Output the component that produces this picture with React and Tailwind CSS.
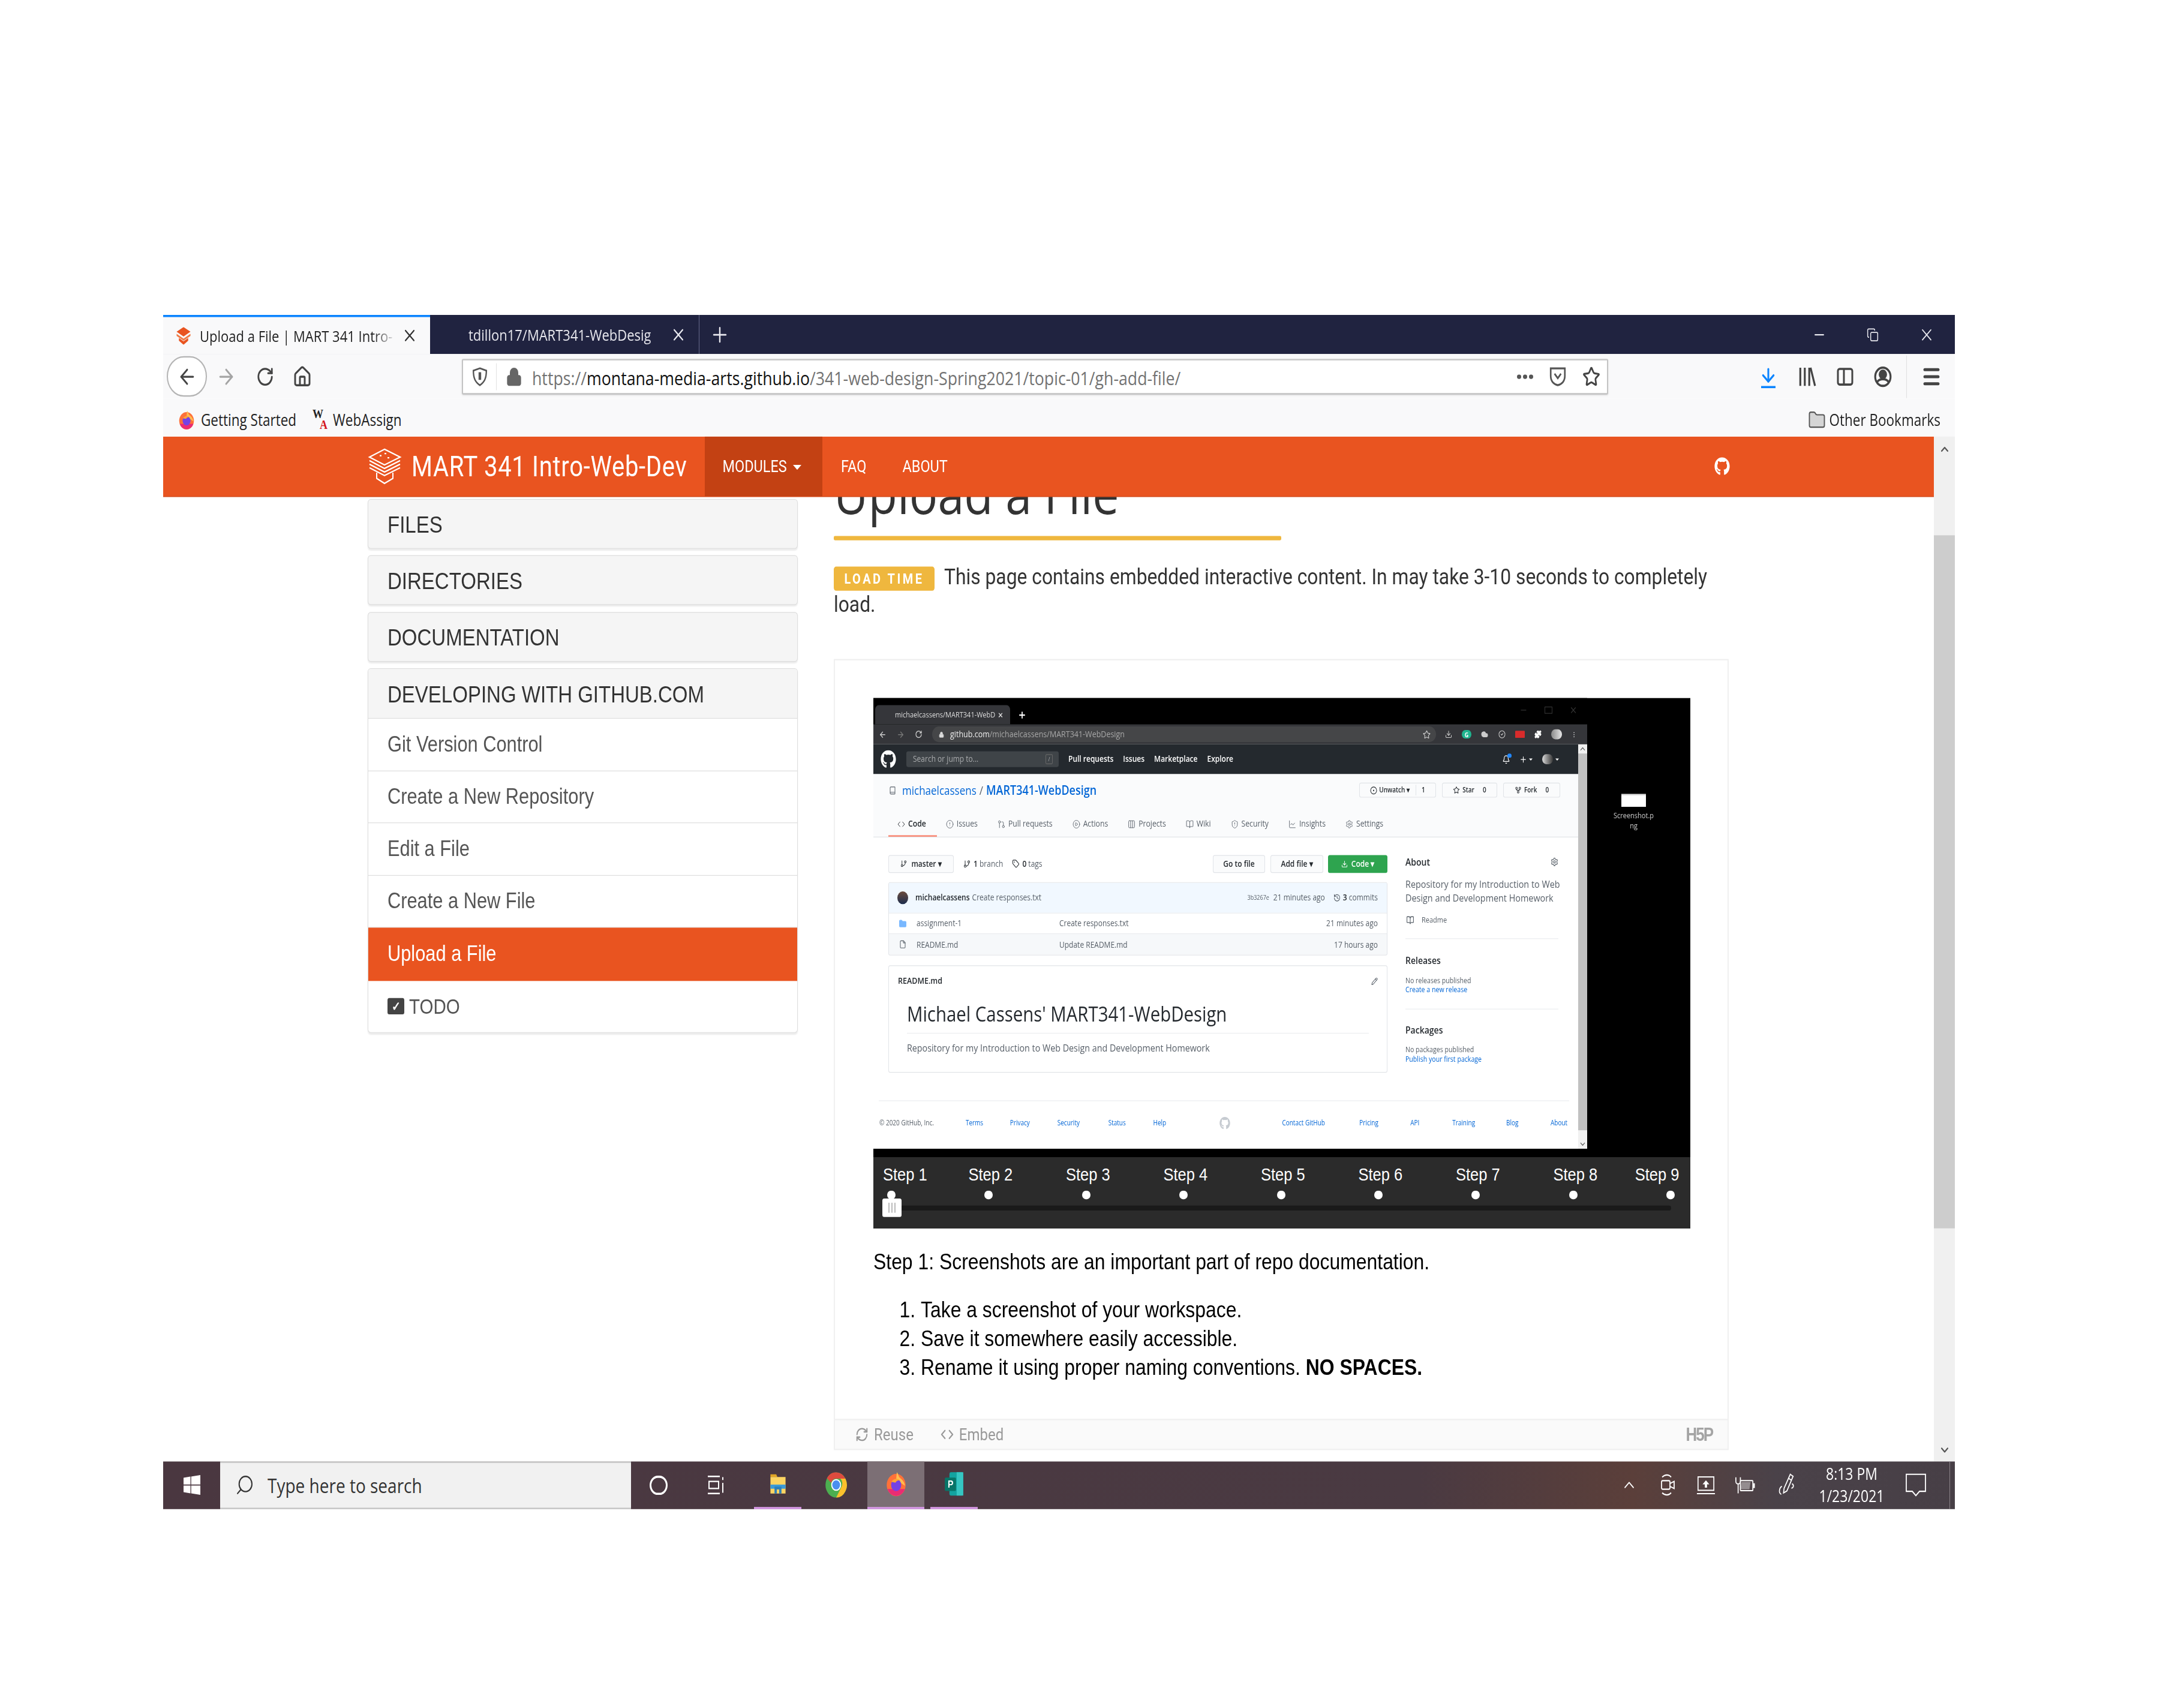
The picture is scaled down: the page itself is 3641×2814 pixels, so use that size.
import React from 'react';
import {
  ArrowLeft, ArrowRight, RotateCw, Home, Lock, Star, Menu, ArrowDown, X, Plus, Minus, Copy,
  Search, Folder, ChevronUp, ChevronDown, Code, CircleAlert,
  GitPullRequest, CirclePlay, Columns3, BookOpen, ShieldAlert, LineChart, Settings, GitBranch, Tag,
  Download, History, File, Pencil, Bell, GitFork, CircleDot, EllipsisVertical, Puzzle, Cloud, CircleCheck,
  Book, RefreshCw,
} from 'lucide-react';
import { FaGithub, FaWindows } from 'react-icons/fa';

const Logo = ({ className, stroke = 'white', fill = 'none' }) => (
  <svg viewBox="0 0 57 52" className={className} fill={fill} stroke={stroke} strokeWidth="2">
    <path d="M28 2 54 13 28 24 3 13Z" />
    <path d="M3 18 28 29 54 18M3 23 28 34 54 23M3 28 28 39 54 28" fill="none" />
    <path d="M15 35V43L28 50 42 43V35" fill="none" />
    <path d="M20 11h3M28 8h3M33 14h3" />
  </svg>
);

const Favicon = ({ className }) => (
  <svg viewBox="0 0 28 26" className={className} fill="#e95420">
    <path d="M14 0 26 7 14 14 2 7Z" />
    <path d="M2 10 14 17 26 10V13L14 20 2 13Z" fill="#f07a45" />
    <path d="M6 16 14 21 22 16V20L14 26 6 20Z" />
  </svg>
);

const FirefoxIcon = ({ className }) => (
  <svg viewBox="0 0 32 32" className={className}>
    <circle cx="16" cy="17" r="14" fill="#ff7139" />
    <path d="M17 1c3 3 2 6 6 8 4 3 6 6 6 9L16 10Z" fill="#ffbd4f" />
    <path d="M3 22a14 14 0 0 0 26 0Z" fill="#e31587" opacity=".75" />
    <circle cx="16" cy="17" r="7.500" fill="#7542e5" />
    <path d="M9 13c3-4 9-5 12-2-3 0-5 1-6 3Z" fill="#ffa436" />
  </svg>
);

const ChromeIcon = ({ className }) => (
  <svg viewBox="0 0 32 32" className={className}>
    <circle cx="16" cy="16" r="15" fill="#4caf50" />
    <path d="M16 1a15 15 0 0 1 13 7.500H16a7.500 7.500 0 0 0-7 5L3 8a15 15 0 0 1 13-7Z" fill="#dd4b3e" />
    <path d="M29 8.500a15 15 0 0 1-13 22.500l7-12a7.500 7.500 0 0 0-1-10.500Z" fill="#fbc02d" />
    <circle cx="16" cy="16" r="7" fill="white" />
    <circle cx="16" cy="16" r="5.500" fill="#4a8ff0" />
  </svg>
);

const ExplorerIcon = ({ className }) => (
  <svg viewBox="0 0 32 32" className={className}>
    <path d="M3 2h10l2 4H3Z" fill="#e0a526" />
    <rect x="3" y="6" width="26" height="24" fill="#fcd462" />
    <rect x="3" y="17" width="26" height="6" fill="#3b9bd8" />
    <path d="M10 30V20h12v10h-4v-6h-4v6Z" fill="#2d7fb8" />
  </svg>
);

const PublisherIcon = ({ className }) => (
  <svg viewBox="0 0 32 32" className={className}>
    <rect x="9" y="1" width="21" height="30" rx="2" fill="#13a3a0" />
    <rect x="20" y="1" width="10" height="30" fill="#36c6c2" />
    <rect x="2" y="8" width="17" height="17" rx="1.500" fill="#077568" />
    <text x="6.500" y="21" fontSize="13" fontWeight="700" fill="white" fontFamily="Liberation Sans">P</text>
  </svg>
);

const H5pMark = () => (
  <span className="font-['Liberation_Sans',sans-serif] text-[26px] font-bold tracking-[-2px] text-[#a4a4a4]">H5P</span>
);

const navLinks = ['FAQ', 'ABOUT'];
const panels = ['FILES', 'DIRECTORIES', 'DOCUMENTATION'];
const items = ['Git Version Control', 'Create a New Repository', 'Edit a File', 'Create a New File'];
const steps = [2, 3, 4, 5, 6, 7, 8];

const TabBar = () => (
  <div className="flex h-[55px] shrink-0 items-stretch bg-[#202340] text-[22px]">
    <div className="flex w-[445px] items-center border-t-[3px] border-[#0a84ff] bg-[#f9f9fa] pl-[20px] text-[#222]">
      <Favicon className="h-[25px] w-[28px]" />
      <span className="ml-[13px] w-[328px] whitespace-nowrap [mask-image:linear-gradient(90deg,#000_88%,transparent)]">Upload a File | MART 341 Intro-</span>
      <X className="ml-[8px] h-[28px] w-[28px] text-[#333]" strokeWidth={1.800} />
    </div>
    <div className="flex w-[449px] items-center border-r border-[#66698a] pl-[64px] text-[#e8e8ee]">
      <span className="w-[326px] whitespace-nowrap [mask-image:linear-gradient(90deg,#000_92%,transparent)]">tdillon17/MART341-WebDesig</span>
      <X className="ml-[10px] h-[28px] w-[28px]" strokeWidth={1.800} />
    </div>
    <div className="flex items-center pl-[17px]">
      <Plus className="h-[34px] w-[34px] text-[#e8e8ee]" strokeWidth={1.700} />
    </div>
    <div className="ml-auto flex items-center gap-[64px] pr-[32px] text-[#e8e8ee]">
      <Minus className="h-[24px] w-[28px]" strokeWidth={1.800} />
      <Copy className="h-[20px] w-[22px]" strokeWidth={1.800} />
      <X className="h-[28px] w-[30px]" strokeWidth={1.500} />
    </div>
  </div>
);

const Toolbar = () => (
  <div className="flex h-[63px] shrink-0 items-center bg-[#f9f9fa] pl-[6px] text-[#444]">
    <div className="flex h-[57px] w-[67px] items-center justify-center rounded-full border-2 border-[#b4b4b4] bg-white">
      <ArrowLeft className="h-[34px] w-[34px]" strokeWidth={2} />
    </div>
    <ArrowRight className="ml-[12px] h-[34px] w-[40px] text-[#a4a4a4]" strokeWidth={2} />
    <RotateCw className="ml-[25px] h-[30px] w-[40px]" strokeWidth={2.200} />
    <Home className="ml-[22px] h-[32px] w-[40px]" strokeWidth={2.200} />
    <div className="ml-[246px] flex h-[50px] w-[1911px] items-center rounded-[2px] border-2 border-[#c4c4c4] bg-white pl-[15px] pr-[11px] shadow-sm">
      <svg viewBox="0 0 24 26" className="h-[30px] w-[26px]" fill="none" stroke="#555" strokeWidth="2.200">
        <path d="M12 2 22 5c0 10-3 15-10 19C5 20 2 15 2 5Z" />
        <path d="M12 7v10" strokeWidth="4" />
      </svg>
      <div className="ml-[14px] h-[38px] w-px bg-[#e2e2e2]" />
      <Lock className="ml-[15px] h-[30px] w-[28px] fill-[#666] text-[#666]" strokeWidth={2} />
      <span className="ml-[16px] mt-[5px] whitespace-nowrap text-[26.700px] text-[#737373]">
        https://<span className="text-[#111]">montana-media-arts.github.io</span>/341-web-design-Spring2021/topic-01/gh-add-file/
      </span>
      <div className="ml-auto flex items-center gap-[26px]">
        <div className="flex gap-[3px]">
          <span className="h-[6px] w-[7px] rounded-full bg-[#555]" />
          <span className="h-[6px] w-[7px] rounded-full bg-[#555]" />
          <span className="h-[6px] w-[7px] rounded-full bg-[#555]" />
        </div>
        <svg viewBox="0 0 28 26" className="h-[30px] w-[30px]" fill="none" stroke="#555" strokeWidth="2.500">
          <path d="M3 2h22v10c0 7-5 11-11 12C8 23 3 19 3 12Z" />
          <path d="M9 9l5 6 5-6" />
        </svg>
        <Star className="h-[32px] w-[30px]" strokeWidth={2.200} />
      </div>
    </div>
    <div className="ml-[247px] flex w-[40px] flex-col items-center text-[#0a84ff]">
      <ArrowDown className="h-[30px] w-[36px]" strokeWidth={2.400} />
      <span className="h-[3px] w-[24px] bg-[#0a84ff]" />
    </div>
    <svg viewBox="0 0 30 30" className="ml-[24px] h-[32px] w-[40px]" fill="none" stroke="#444" strokeWidth="3">
      <path d="M5 3v24M12 3v24M19 3v24M21 3l7 24" />
    </svg>
    <svg viewBox="0 0 30 30" className="ml-[23px] h-[30px] w-[40px]" fill="none" stroke="#444" strokeWidth="3">
      <rect x="4" y="4" width="24" height="22" rx="3" />
      <path d="M14 4v22" />
    </svg>
    <svg viewBox="0 0 30 30" className="ml-[24px] h-[32px] w-[40px]" fill="none" stroke="#444" strokeWidth="3">
      <circle cx="15" cy="15" r="12" />
      <circle cx="15" cy="12" r="5" fill="#444" />
      <path d="M6 22c4-5 14-5 18 0" />
    </svg>
    <div className="ml-[19px] h-[60px] w-px bg-[#e0e0e0]" />
    <Menu className="ml-[21px] h-[34px] w-[40px]" strokeWidth={3} />
  </div>
);

const BookmarkBar = () => (
  <div className="flex h-[52.500px] shrink-0 items-center justify-between bg-[#f9f9fa] pl-[25px] pr-[24px] pt-[7px] text-[22.500px] text-[#222]">
    <div className="flex items-center">
      <FirefoxIcon className="h-[28px] w-[28px]" />
      <span className="ml-[10px]">Getting Started</span>
      <span className="ml-[27px] flex h-[32px] w-[30px] flex-col font-['Liberation_Serif',serif] text-[18px] font-bold leading-[15px]">
        <span className="text-[#222]">W</span>
        <span className="pl-[12px] text-[#d3141c]">A</span>
      </span>
      <span className="ml-[4px]">WebAssign</span>
    </div>
    <div className="flex items-center gap-[5px]">
      <Folder className="h-[30px] w-[32px] fill-[#d5d5d5] text-[#555]" strokeWidth={1.500} />
      <span>Other Bookmarks</span>
    </div>
  </div>
);

const Navbar = () => (
  <div className="relative z-10 flex h-[85px] shrink-0 items-stretch border-b border-[#cf4a1c] bg-[#e95420] pl-[341px] font-[Roboto,sans-serif] text-white">
    <div className="flex w-[561.500px] items-center">
      <Logo className="h-[52px] w-[57px]" />
      <span className="ml-[16px] pt-[2px] text-[40px] leading-none tracking-[0.700px]">MART 341 Intro-Web-Dev</span>
    </div>
    <div className="flex w-[196.500px] items-center bg-[#c34113] pl-[30px] pt-[2px] text-[23.500px]">
      MODULES
      <span className="ml-[10px] mt-[2px] border-x-[7px] border-t-[7px] border-x-transparent border-t-white" />
    </div>
    <div className="flex items-center gap-[60px] pl-[31px] pt-[2px] text-[23.500px]">
      {navLinks.map((link) => <span key={link}>{link}</span>)}
    </div>
    <FaGithub className="ml-[1278px] mt-[29px] h-[26px] w-[26px]" />
  </div>
);

const Sidebar = () => (
  <div className="ml-[341px] mt-[3.400px] flex w-[717px] shrink-0 flex-col gap-[9.500px] font-['Liberation_Sans',sans-serif]">
    {panels.map((panel) => (
      <div key={panel} className="flex h-[70px] items-center rounded-[5px] border border-[#ddd] bg-[#f5f5f5] pl-[32px] pt-[2px] text-[33px] text-[#333] shadow-[0_2px_2px_rgba(0,0,0,.08)]">
        {panel}
      </div>
    ))}
    <div className="overflow-hidden rounded-[5px] border border-[#ddd] bg-white shadow-[0_2px_2px_rgba(0,0,0,.08)]">
      <div className="flex h-[70px] items-center border-b border-[#ddd] bg-[#f5f5f5] pl-[32px] pt-[2px] text-[33px] text-[#333]">
        DEVELOPING WITH GITHUB.COM
      </div>
      {items.map((item) => (
        <div key={item} className="flex h-[73.400px] items-center border-b border-[#ddd] pl-[32px] text-[30.800px] text-[#555]">
          {item}
        </div>
      ))}
      <div className="flex h-[75px] items-center bg-[#e95420] pl-[32px] text-[30.800px] text-white">Upload a File</div>
      <div className="flex h-[72px] items-center pl-[32px] text-[29.500px] text-[#555]">
        <span className="flex h-[23px] w-[28px] items-center justify-center rounded-[3px] bg-[#444] text-[18px] font-bold leading-none text-white">✓</span>
        <span className="ml-[8px]">TODO</span>
      </div>
    </div>
  </div>
);

const GhButton = ({ children, className = '' }) => (
  <div className={`flex items-center justify-center rounded-[3px] border border-[#e1e4e8] bg-[#fafbfc] text-[#24292e] ${className}`}>
    {children}
  </div>
);

const tabs = [
  [Code, 'Code'], [CircleAlert, 'Issues'], [GitPullRequest, 'Pull requests'], [CirclePlay, 'Actions'],
  [Columns3, 'Projects'], [BookOpen, 'Wiki'], [ShieldAlert, 'Security'], [LineChart, 'Insights'], [Settings, 'Settings'],
];

const footerLeft = [['Terms', 'w-[74px]'], ['Privacy', 'w-[79px]'], ['Security', 'w-[85px]'], ['Status', 'w-[75px]'], ['Help', 'w-[109px]']];
const footerRight = [['Contact GitHub', 'w-[129px]'], ['Pricing', 'w-[85px]'], ['API', 'w-[70px]'], ['Training', 'w-[90px]'], ['Blog', 'w-[74px]'], ['About', 'w-[31px]']];

const FileRow = ({ icon, name, message, time, className = '' }) => (
  <div className={`flex h-[29.500px] items-center border-t border-[#eaecef] pl-[15px] pr-[15px] text-[12px] text-[#586069] ${className}`}>
    <span className="flex w-[16px] justify-center">{icon}</span>
    <span className="ml-[15px] w-[238px]">{name}</span>
    <span>{message}</span>
    <span className="ml-auto">{time}</span>
  </div>
);

const RepoShot = () => (
  <div className="flex h-[634px] w-[1190px] shrink-0 flex-col font-['Open_Sans',sans-serif]">
    <div className="flex h-[37px] shrink-0 items-end bg-black pl-[3px] text-[#ddd]">
      <div className="flex h-[27px] w-[225px] items-center rounded-t-[6px] bg-[#35363a] pl-[33px] text-[11px]">
        <span className="w-[165px] whitespace-nowrap">michaelcassens/MART341-WebD</span>
        <X className="ml-[6px] h-[10px] w-[10px]" strokeWidth={3} />
      </div>
      <Plus className="mb-[6px] ml-[13px] h-[14px] w-[14px] text-white" strokeWidth={3} />
      <div className="ml-auto mb-[13px] flex items-center gap-[28px] pr-[16px] text-[#333]">
        <Minus className="h-[14px] w-[14px]" />
        <span className="h-[10px] w-[13px] border border-[#333]" />
        <X className="h-[14px] w-[14px]" />
      </div>
    </div>
    <div className="flex h-[28px] shrink-0 items-center bg-[#35363a] pl-[9px] text-[#ccc]">
      <ArrowLeft className="h-[13px] w-[13px]" strokeWidth={2.500} />
      <ArrowRight className="ml-[17px] h-[13px] w-[13px] text-[#777]" strokeWidth={2.500} />
      <RotateCw className="ml-[17px] h-[12px] w-[13px]" strokeWidth={2.500} />
      <div className="ml-[16px] flex h-[22px] w-[840px] items-center rounded-full bg-[#454648] pl-[11px] pr-[9px] text-[13px]">
        <Lock className="h-[11px] w-[9px] fill-[#ddd]" />
        <span className="ml-[10px] text-[12.500px] text-[#eee]">github.com<span className="text-[#a8a8a8]">/michaelcassens/MART341-WebDesign</span></span>
        <Star className="ml-auto h-[13px] w-[13px]" />
      </div>
      <div className="ml-[14px] flex items-center gap-[15px]">
        <Download className="h-[12px] w-[14px]" />
        <span className="flex h-[12px] w-[16px] items-center justify-center rounded-full bg-[#1fb58f] text-[9px] font-bold leading-none text-white">G</span>
        <Cloud className="h-[12px] w-[14px] fill-[#ccc]" />
        <CircleCheck className="h-[12px] w-[14px]" />
        <span className="h-[10px] w-[16px] rounded-[1px] bg-[#d92b2b]" />
        <Puzzle className="h-[12px] w-[14px] fill-white text-white" />
        <span className="h-[14px] w-[18px] rounded-full bg-gradient-to-r from-[#8a8a8a] to-[#e8e8e8]" />
        <EllipsisVertical className="h-[13px] w-[10px]" />
      </div>
    </div>
    <div className="flex min-h-0 flex-1">
      <div className="flex w-[1175px] flex-col overflow-hidden bg-white">
        <div className="flex h-[42px] shrink-0 items-center bg-[#24292e] pl-[10px] text-[12px] font-semibold text-white">
          <FaGithub className="h-[26px] w-[30px]" />
          <div className="ml-[15px] flex h-[22px] w-[254px] items-center rounded-[3px] bg-[#3f4448] pl-[11px] pr-[10px] font-normal text-[#a9abad]">
            Search or jump to...
            <span className="ml-auto flex h-[14px] w-[12px] items-center justify-center rounded-[2px] border border-[#666] text-[8px] leading-none">/</span>
          </div>
          <div className="ml-[16px] flex gap-[16px]">
            <span>Pull requests</span>
            <span>Issues</span>
            <span>Marketplace</span>
            <span>Explore</span>
          </div>
          <div className="ml-auto flex items-center pr-[32px]">
            <span className="relative">
              <Bell className="h-[13px] w-[14px]" />
              <span className="absolute -right-[2px] -top-[2px] h-[6px] w-[7px] rounded-full bg-[#2188ff]" />
            </span>
            <Plus className="ml-[15px] h-[13px] w-[13px]" />
            <span className="ml-[3px] border-x-[3px] border-t-[3px] border-x-transparent border-t-white" />
            <span className="ml-[16px] h-[14px] w-[18px] rounded-full bg-gradient-to-r from-[#ddd] to-[#3a3a3a]" />
            <span className="ml-[4px] border-x-[3px] border-t-[3px] border-x-transparent border-t-white" />
          </div>
        </div>
        <div className="flex h-[88.600px] shrink-0 flex-col border-b border-[#e1e4e8] bg-[#fafbfc]">
          <div className="mt-[12px] flex h-[21px] items-center pl-[26px] pr-[30px]">
            <Book className="h-[16px] w-[12px] text-[#586069]" />
            <span className="ml-[10px] text-[17px] text-[#0366d6]">michaelcassens</span>
            <span className="mx-[5px] text-[17px] text-[#586069]">/</span>
            <span className="text-[18px] font-semibold text-[#0366d6]">MART341-WebDesign</span>
            <div className="ml-auto flex items-center gap-[10px] text-[10px] font-semibold">
              <GhButton className="h-[21px] w-[128px]">
                <CircleDot className="h-[12px] w-[12px]" />
                <span className="ml-[3px]">Unwatch ▾</span>
                <span className="ml-[10px] border-l border-[#e1e4e8] pl-[9px]">1</span>
              </GhButton>
              <GhButton className="h-[21px] w-[92px]">
                <Star className="h-[11px] w-[12px]" />
                <span className="ml-[4px]">Star</span>
                <span className="ml-[14px]">0</span>
              </GhButton>
              <GhButton className="h-[21px] w-[95px]">
                <GitFork className="h-[11px] w-[12px]" />
                <span className="ml-[4px]">Fork</span>
                <span className="ml-[14px]">0</span>
              </GhButton>
            </div>
          </div>
          <div className="mt-[28px] flex h-[18px] items-center gap-[33px] pl-[40px] text-[12.200px] text-[#586069]">
            {tabs.map(([Icon, label], i) => (
              <span key={label} className={`flex items-center gap-[5px] ${i === 0 ? 'font-semibold text-[#24292e]' : ''}`}>
                <Icon className="h-[13px] w-[13px]" strokeWidth={1.500} />
                {label}
              </span>
            ))}
          </div>
          <div className="ml-[25px] mt-auto h-[2px] w-[81px] bg-[#f9826c]" />
        </div>
        <div className="flex h-[341px] shrink-0 pl-[25px]">
          <div className="w-[832px] shrink-0">
            <div className="mt-[25px] flex h-[25.300px] items-center text-[12px] font-semibold text-[#24292e]">
              <GhButton className="h-full w-[109px]">
                <GitBranch className="h-[12px] w-[11px]" />
                <span className="ml-[7px]">master ▾</span>
              </GhButton>
              <GitBranch className="ml-[16px] h-[13px] w-[12px]" />
              <span className="ml-[5px]">1 <span className="font-normal text-[#586069]">branch</span></span>
              <Tag className="ml-[15px] h-[12px] w-[13px]" />
              <span className="ml-[4px]">0 <span className="font-normal text-[#586069]">tags</span></span>
              <GhButton className="ml-auto h-full w-[87px]">Go to file</GhButton>
              <GhButton className="ml-[9px] h-full w-[88px]">Add file ▾</GhButton>
              <div className="ml-[8px] flex h-full w-[99px] items-center justify-center rounded-[3px] bg-[#2ea44f] text-white">
                <Download className="h-[11px] w-[11px]" />
                <span className="ml-[6px]">Code ▾</span>
              </div>
            </div>
            <div className="mt-[12.700px] overflow-hidden rounded-[3px] border border-[#e1e4e8]">
              <div className="flex h-[42px] items-center bg-[#f1f8ff] pl-[14px] pr-[15px] text-[12px] text-[#586069]">
                <span className="h-[18px] w-[18px] rounded-full bg-gradient-to-b from-[#6b4a3a] to-[#1c2c4c]" />
                <span className="ml-[12px] font-semibold text-[#24292e]">michaelcassens</span>
                <span className="ml-[4px]">Create responses.txt</span>
                <span className="ml-auto text-[9px]">3b3267e</span>
                <span className="ml-[7px]">21 minutes ago</span>
                <History className="ml-[14px] h-[12px] w-[12px]" />
                <span className="ml-[4px]"><b className="font-semibold text-[#24292e]">3</b> commits</span>
              </div>
              <FileRow
                icon={<Folder className="h-[13px] w-[14px] fill-[#79b8ff] text-[#79b8ff]" />}
                name="assignment-1"
                message="Create responses.txt"
                time="21 minutes ago"
              />
              <FileRow
                className="bg-[#f6f8fa]"
                icon={<File className="h-[13px] w-[12px]" />}
                name="README.md"
                message="Update README.md"
                time="17 hours ago"
              />
            </div>
            <div className="mt-[14.300px] h-[151px] rounded-[3px] border border-[#e1e4e8] px-[30px]">
              <div className="-mx-[15px] mt-[12px] flex items-center justify-between text-[12.500px] font-semibold text-[#24292e]">
                README.md
                <Pencil className="h-[13px] w-[11px] text-[#586069]" />
              </div>
              <div className="mt-[18.500px] border-b border-[#eaecef] pb-[9px] text-[29.400px] leading-[36px] text-[#24292e]">
                Michael Cassens' MART341-WebDesign
              </div>
              <div className="mt-[10px] whitespace-nowrap text-[14.300px] leading-[20px] text-[#586069]">
                Repository for my Introduction to Web Design and Development Homework
              </div>
            </div>
          </div>
          <div className="ml-[30px] w-[262px] shrink-0 text-[10.600px] leading-[13.500px] text-[#586069]">
            <div className="mt-[26px] flex h-[17px] w-[255px] items-center justify-between text-[14px] font-semibold text-[#24292e]">
              About
              <Settings className="h-[13px] w-[13px] text-[#586069]" />
            </div>
            <div className="mt-[14.250px] text-[14.400px] leading-[18.500px]">
              Repository for my Introduction to Web Design and Development Homework
            </div>
            <div className="mt-[14px] flex h-[16px] items-center">
              <BookOpen className="h-[13px] w-[16px]" />
              <span className="ml-[11px] text-[11px]">Readme</span>
            </div>
            <div className="mt-[18.300px] h-px w-[255px] bg-[#eaecef]" />
            <div className="mt-[21px] h-[17px] text-[14px] font-semibold leading-[17px] text-[#24292e]">Releases</div>
            <div className="mt-[13.300px]">No releases published</div>
            <div className="text-[#0366d6]">Create a new release</div>
            <div className="mt-[19.300px] h-px w-[255px] bg-[#eaecef]" />
            <div className="mt-[20px] h-[17px] text-[14px] font-semibold leading-[17px] text-[#24292e]">Packages</div>
            <div className="mt-[13.500px]">No packages published</div>
            <div className="text-[#0366d6]">Publish your first package</div>
          </div>
        </div>
        <div className="ml-[9px] mr-[15px] mt-auto flex h-[68px] items-center border-t border-[#eaecef] pb-[6px] pl-[1px] text-[10px] text-[#0366d6]">
          <span className="w-[144px] text-[#586069]">© 2020 GitHub, Inc.</span>
          {footerLeft.map(([link, width]) => <span key={link} className={width}>{link}</span>)}
          <FaGithub className="h-[18px] w-[20px] text-[#c6cbd1]" />
          <span className="w-[86px]" />
          {footerRight.map(([link, width]) => <span key={link} className={`${width} whitespace-nowrap`}>{link}</span>)}
        </div>
      </div>
      <div className="flex w-[15px] flex-col bg-[#f1f1f1]">
        <ChevronUp className="h-[13px] w-[15px] text-[#555]" />
        <div className="h-[530px] bg-[#c1c1c1]" />
        <ChevronDown className="mt-auto h-[13px] w-[15px] text-[#555]" />
      </div>
    </div>
  </div>
);

const StepBar = () => (
  <div className="relative h-[100px] bg-[#2b2b2b] pt-[14px] font-['Liberation_Sans',sans-serif] text-white">
    <div className="flex pl-[16px] text-[25.500px] leading-[21px]">
      <span className="w-[98px] shrink-0 whitespace-nowrap">Step 1</span>
      {steps.map((n) => <span key={n} className="w-[162.500px] shrink-0 text-center">Step {n}</span>)}
      <span className="w-[110px] shrink-0 text-center">Step 9</span>
    </div>
    <div className="ml-[23px] mt-[12px] flex w-[1313px] justify-between">
      {[1, ...steps, 9].map((n) => <span key={n} className="h-[12px] w-[14px] rounded-full bg-white" />)}
    </div>
    <div className="ml-[30px] mt-[8.500px] h-[7.600px] w-[1300px] rounded-full bg-[#1a1a1a]" />
    <div className="absolute left-[15px] top-[58px] flex h-[26px] w-[32px] items-center justify-center gap-[3px] rounded-[3px] bg-white">
      <span className="h-[14px] w-[2px] bg-[#bbb]" />
      <span className="h-[14px] w-[2px] bg-[#bbb]" />
      <span className="h-[14px] w-[2px] bg-[#bbb]" />
    </div>
  </div>
);

const H5pCard = () => (
  <div className="mt-[57px] flex h-[1113px] flex-col border-2 border-[#f0f0f0] font-['Liberation_Sans',sans-serif] text-black">
    <div className="flex-1 pl-[64px] pr-[62px] pt-[53px]">
      <div className="w-[1362px]">
        <div className="flex bg-black pb-[12px]">
          <RepoShot />
          <div className="flex-1 pr-[17px] pt-[135px] font-['Open_Sans',sans-serif]">
            <div className="mx-auto h-[18px] w-[41px] border-t-2 border-[#ddd] bg-white" />
            <div className="mt-[5px] text-center text-[11px] leading-[13.500px] text-[#ccc]">Screenshot.p<br />ng</div>
          </div>
        </div>
        <StepBar />
      </div>
      <p className="mt-[27px] text-[31.900px] leading-[40px]">Step 1: Screenshots are an important part of repo documentation.</p>
      <ol className="mt-[27px] list-decimal pl-[79px] text-[31.900px] leading-[40.500px]">
        <li>Take a screenshot of your workspace.</li>
        <li>Save it somewhere easily accessible.</li>
        <li>Rename it using proper naming conventions. <b>NO SPACES.</b></li>
      </ol>
    </div>
    <div className="flex h-[42px] shrink-0 items-center border-t-2 border-[#f0f0f0] bg-[#fafafa] pl-[33px] pr-[25px] font-[Roboto,sans-serif] text-[24px] text-[#999]">
      <RefreshCw className="h-[22px] w-[24px]" strokeWidth={2.200} />
      <span className="ml-[8px]">Reuse</span>
      <Code className="ml-[44px] h-[22px] w-[24px]" strokeWidth={2.200} />
      <span className="ml-[8px]">Embed</span>
      <span className="ml-auto"><H5pMark /></span>
    </div>
  </div>
);

const MainColumn = () => (
  <div className="ml-[60px] w-[1492px] shrink-0 font-[Roboto,sans-serif] text-[#333]">
    <h1 className="-mt-[48px] font-['Open_Sans',sans-serif] text-[79px] font-normal leading-[84px]">Upload a File</h1>
    <div className="mt-[19px] h-[6.750px] w-[746px] rounded-[2px] bg-[#efb73e]" />
    <p className="mt-[31.400px] text-[31.800px] leading-[39px]">
      <span className="mr-[16px] inline-block h-[34.600px] w-[168px] rounded-[4px] bg-[#efb73e] text-center align-[1px] text-[20px] font-bold leading-[34.600px] tracking-[3.500px] text-white">LOAD TIME</span>
      This page contains embedded interactive content. In may take 3-10 seconds to completely load.
    </p>
    <H5pCard />
  </div>
);

const TaskSlot = ({ children, className = '' }) => (
  <div className={`flex flex-col items-center ${className}`}>
    <div className="flex flex-1 items-center justify-center">{children}</div>
    <span className="h-[3.400px] w-full bg-[#d89ae8]" />
  </div>
);

const Taskbar = () => (
  <div className="flex h-[67.500px] shrink-0 items-stretch bg-[linear-gradient(90deg,#4a3740_0%,#4a3a42_70%,#5b3f3a_82%,#4a4249_90%,#473f46_100%)] font-['Open_Sans',sans-serif] text-white">
    <div className="flex w-[95px] items-center justify-center">
      <FaWindows className="h-[32px] w-[40px]" />
    </div>
    <div className="flex w-[685px] items-center border-y-2 border-[#c6c6c6] bg-[#f1f1f1] pl-[25px] text-[28px] text-[#333]">
      <Search className="h-[38px] w-[32px] -scale-x-100" strokeWidth={1.500} />
      <span className="ml-[22px]">Type here to search</span>
    </div>
    <div className="ml-[31px] flex items-center">
      <span className="h-[27px] w-[30px] rounded-full border-[3.500px] border-white" />
    </div>
    <div className="ml-[65px] flex items-center">
      <svg viewBox="0 0 30 30" className="h-[32px] w-[30px]" fill="none" stroke="white" strokeWidth="2">
        <path d="M2 3h20M2 27h20M4 10h16v10H4ZM27 4v4M27 12v14" />
      </svg>
    </div>
    <TaskSlot className="ml-[49px] w-[79px]"><ExplorerIcon className="h-[31px] w-[42px]" /></TaskSlot>
    <div className="ml-[18px] flex w-[79px] items-center justify-center">
      <ChromeIcon className="h-[38px] w-[46px]" />
    </div>
    <TaskSlot className="ml-[13px] w-[95px] bg-[#7c6f75]"><FirefoxIcon className="h-[36px] w-[38px]" /></TaskSlot>
    <TaskSlot className="ml-[10px] w-[79px]"><PublisherIcon className="h-[35px] w-[47px]" /></TaskSlot>
    <div className="ml-auto flex items-center">
      <ChevronUp className="h-[28px] w-[36px]" strokeWidth={1.500} />
      <svg viewBox="0 0 28 34" className="ml-[32px] h-[34px] w-[28px]" fill="none" stroke="white" strokeWidth="1.800">
        <path d="M5 6c5-4 11-4 15 0M5 28c5 4 11 4 15 0" />
        <rect x="4" y="11" width="14" height="12" rx="2" />
        <path d="M18 15l7-3v10l-7-3" />
      </svg>
      <svg viewBox="0 0 34 30" className="ml-[34px] h-[30px] w-[32px]" fill="none" stroke="white" strokeWidth="1.800">
        <rect x="3" y="3" width="28" height="20" />
        <path d="M1 28h32" />
        <path d="M17 8l6 6h-4v5h-4v-5h-4Z" fill="white" stroke="none" />
      </svg>
      <svg viewBox="0 0 36 28" className="ml-[32px] h-[27px] w-[34px]" fill="none" stroke="white" strokeWidth="1.800">
        <path d="M2 2v6a4 4 0 0 0 8 0V2M6 12v14" />
        <rect x="10" y="7" width="22" height="15" rx="1" />
        <path d="M34 11v7" strokeWidth="3" />
        <path d="M12 9h16l-2 11H10Z" fill="white" opacity=".4" stroke="none" />
      </svg>
      <svg viewBox="0 0 32 36" className="ml-[38px] h-[34px] w-[30px]" fill="none" stroke="white" strokeWidth="1.800">
        <path d="M22 2l5 3-11 22-6 3 1-7ZM19 8l5 3" />
        <path d="M7 20c-5 3-6 10-1 12M25 16c4 2 3 6-1 7" />
      </svg>
      <div className="ml-[40px] flex w-[106px] flex-col items-center text-[23px] leading-[31px]">
        <span>8:13 PM</span>
        <span>1/23/2021</span>
      </div>
      <svg viewBox="0 0 36 34" className="ml-[36px] h-[34px] w-[36px]" fill="none" stroke="white" strokeWidth="1.800">
        <path d="M2 2h32v24H24l-6 6-6-6H2Z" />
      </svg>
      <div className="ml-[38px] h-full w-[9px] border-l border-[#8a8388]" />
    </div>
  </div>
);

const App = () => {
  return (
    <div className="h-[2814px] w-[3641px] overflow-hidden bg-white pl-[272px] pt-[525px]">
      <div className="flex h-[1680px] w-[2987px] origin-top scale-y-[1.185] flex-col overflow-hidden font-['Open_Sans',sans-serif]">
        <TabBar />
        <Toolbar />
        <BookmarkBar />
        <div className="flex h-[1442px] shrink-0">
          <div className="flex w-[2952px] flex-col overflow-hidden bg-white">
            <Navbar />
            <div className="flex min-h-0 flex-1">
              <Sidebar />
              <MainColumn />
            </div>
          </div>
          <div className="flex w-[35px] flex-col items-center bg-[#f0f0f0] text-[#555]">
            <ChevronUp className="mt-[8px] h-[20px] w-[20px]" strokeWidth={2.500} />
            <div className="mt-[111px] h-[975px] w-full bg-[#cdcdcd]" />
            <ChevronDown className="mb-[6px] mt-auto h-[20px] w-[20px]" strokeWidth={2.500} />
          </div>
        </div>
        <Taskbar />
      </div>
    </div>
  );
};

export default App;
